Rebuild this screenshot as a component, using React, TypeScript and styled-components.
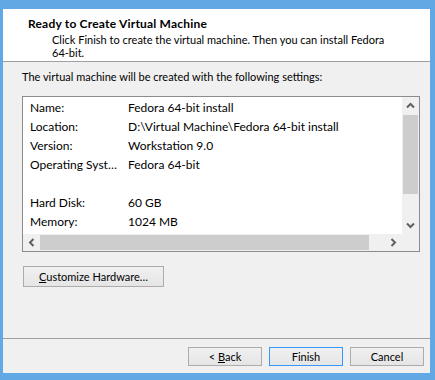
import React from 'react';
import styled, { createGlobalStyle } from 'styled-components';

const GlobalStyle = createGlobalStyle`
  html, body {
    margin: 0;
    padding: 0;
    background: #62a8e5;
  }
  body {
    font-family: Lato, 'Liberation Sans', Arial, sans-serif;
    font-size: 11px;
    color: #000;
  }
`;

// outer window frame (blue Windows 8 border)
const Frame = styled.div`
  width: 435px;
  height: 380px;
  box-sizing: border-box;
  padding: 9px 5px 7px 3px;
`;

const Dialog = styled.div`
  width: 427px;
  height: 364px;
  display: flex;
  flex-direction: column;
  background: #f0f0f0;
`;

const Header = styled.div`
  height: 53px;
  box-sizing: border-box;
  background: #fff;
  border-bottom: 1px solid #a0a0a0;
  padding: 7px 22px 0 25px;
`;

const Title = styled.div`
  font-size: 12px;
  font-weight: bold;
  letter-spacing: 0.2px;
  line-height: 15px;
`;

const Subtitle = styled.div`
  margin: 2px 0 0 24px;
  line-height: 13px;
`;

const NoWrap = styled.span`
  white-space: nowrap;
`;

const Body = styled.div`
  flex: 1;
  padding: 7px 10px 0 19px;
`;

const Intro = styled.div`
  line-height: 15px;
`;

const ListBox = styled.div`
  margin-top: 12px;
  width: 398px;
  height: 156px;
  box-sizing: border-box;
  border: 1px solid #8c8c8c;
  background: #fff;
  display: grid;
  grid-template-columns: 1fr 17px;
  grid-template-rows: 1fr 17px;
`;

const Content = styled.div`
  padding: 1px 0 0 7px;
  overflow: hidden;
  font-size: 12px;
`;

const Row = styled.div`
  display: flex;
  height: 19px;
  line-height: 19px;
  white-space: nowrap;
`;

const Label = styled.div`
  width: 98px;
`;

const VScroll = styled.div`
  background: #f0f0f0;
  display: flex;
  flex-direction: column;
`;

const HScroll = styled.div`
  background: #f0f0f0;
  display: flex;
  align-items: center;
`;

const Corner = styled.div`
  background: #f0f0f0;
`;

const Arrow = styled.div`
  width: 17px;
  height: 17px;
  flex: none;
  display: flex;
  align-items: center;
  justify-content: center;
`;

const Track = styled.div<{ $vertical?: boolean }>`
  flex: 1;
  align-self: stretch;
  display: flex;
  flex-direction: ${p => (p.$vertical ? 'column' : 'row')};
  padding: 1px;
  padding-left: ${p => (p.$vertical ? 1 : 0)}px;
`;

const Thumb = styled.div`
  flex: none;
  background: #cdcdcd;
`;

const Button = styled.button<{ $default?: boolean; $width?: number; $height?: number }>`
  font: inherit;
  color: #000;
  width: ${p => p.$width ?? 74}px;
  height: ${p => p.$height ?? 19}px;
  padding: 0;
  border: 1px solid ${p => (p.$default ? '#3399ff' : '#acacac')};
  background: linear-gradient(#f0f0f0, #e5e5e5);
  box-sizing: border-box;
  line-height: 1;
  u {
    text-decoration: underline;
  }
`;

const CustomizeRow = styled.div`
  margin: 14px 0 0 1px;
`;

const Footer = styled.div`
  border-top: 1px solid #a0a0a0;
  padding: 8px 6px 7px 0;
  display: flex;
  justify-content: flex-end;
  gap: 7px;
`;

type Dir = 'up' | 'down' | 'left' | 'right';

const Chevron = ({ dir }: { dir: Dir }) => {
  const rot = { up: 0, right: 90, down: 180, left: 270 }[dir];
  return (
    <svg width="9" height="9" viewBox="0 0 9 9">
      <path
        d="M1 6.5 L4.5 3 L8 6.5"
        fill="none"
        stroke="#606060"
        strokeWidth="2"
        transform={`rotate(${rot} 4.5 4.5)`}
      />
    </svg>
  );
};

const rows: [string, string][] = [
  ['Name:', 'Fedora 64-bit install'],
  ['Location:', 'D:\\Virtual Machine\\Fedora 64-bit install'],
  ['Version:', 'Workstation 9.0'],
  ['Operating Syst…', 'Fedora 64-bit'],
  ['', ''],
  ['Hard Disk:', '60 GB'],
  ['Memory:', '1024 MB'],
];

export default function App() {
  return (
    <Frame>
      <GlobalStyle />
      <Dialog>
        <Header>
          <Title>Ready to Create Virtual Machine</Title>
          <Subtitle>
            Click Finish to create the virtual machine. Then you can install Fedora{' '}
            <NoWrap>64-bit.</NoWrap>
          </Subtitle>
        </Header>
        <Body>
          <Intro>The virtual machine will be created with the following settings:</Intro>
          <ListBox>
            <Content>
              {rows.map(([label, value], i) => (
                <Row key={i}>
                  <Label>{label}</Label>
                  <div>{value}</div>
                </Row>
              ))}
            </Content>
            <VScroll>
              <Arrow><Chevron dir="up" /></Arrow>
              <Track $vertical>
                <Thumb style={{ height: 79 }} />
              </Track>
              <Arrow><Chevron dir="down" /></Arrow>
            </VScroll>
            <HScroll>
              <Arrow><Chevron dir="left" /></Arrow>
              <Track>
                <Thumb style={{ width: 329 }} />
              </Track>
              <Arrow><Chevron dir="right" /></Arrow>
            </HScroll>
            <Corner />
          </ListBox>
          <CustomizeRow>
            <Button $width={141} $height={21}>
              <u>C</u>ustomize Hardware…
            </Button>
          </CustomizeRow>
        </Body>
        <Footer>
          <Button>
            &lt; <u>B</u>ack
          </Button>
          <Button $default>Finish</Button>
          <Button>Cancel</Button>
        </Footer>
      </Dialog>
    </Frame>
  );
}
